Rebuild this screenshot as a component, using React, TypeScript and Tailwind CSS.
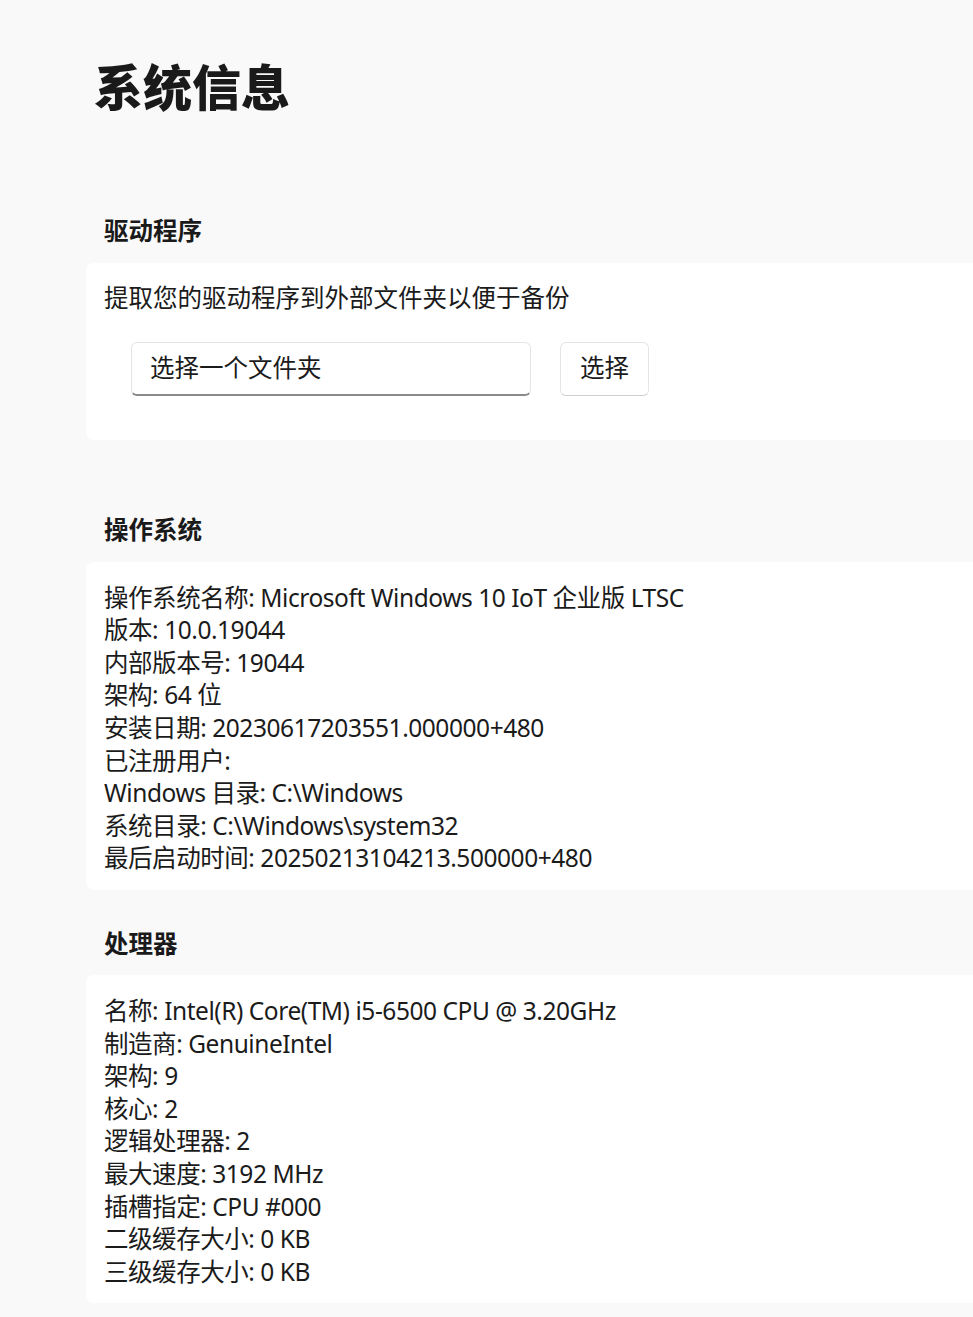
const osLines = [
  '操作系统名称: Microsoft Windows 10 IoT 企业版 LTSC',
  '版本: 10.0.19044',
  '内部版本号: 19044',
  '架构: 64 位',
  '安装日期: 20230617203551.000000+480',
  '已注册用户: ',
  'Windows 目录: C:\\Windows',
  '系统目录: C:\\Windows\\system32',
  '最后启动时间: 20250213104213.500000+480',
];

const cpuLines = [
  '名称: Intel(R) Core(TM) i5-6500 CPU @ 3.20GHz',
  '制造商: GenuineIntel',
  '架构: 9',
  '核心: 2',
  '逻辑处理器: 2',
  '最大速度: 3192 MHz',
  '插槽指定: CPU #000',
  '二级缓存大小: 0 KB',
  '三级缓存大小: 0 KB',
];

function SectionHeader({ title, className }: { title: string; className: string }) {
  return <h2 className={`pl-[18px] text-[24.5px] leading-[32px] font-bold text-[#1a1a1a] ${className}`}>{title}</h2>;
}

function InfoCard({ lines }: { lines: string[] }) {
  return (
    <div className="bg-white rounded-lg pl-[18px] pt-[20px] pb-[15px]">
      {lines.map((line) => (
        <div key={line} className="text-[24.5px] leading-[32.6px] tracking-[-0.45px] text-[#1b1b1b] whitespace-pre">
          {line}
        </div>
      ))}
    </div>
  );
}

export default function App() {
  return (
    <div
      className="min-h-screen bg-[#f9f9f9] overflow-hidden"
      style={{ fontFamily: '"Noto Sans", "Noto Sans CJK SC", sans-serif' }}
    >
      <div className="pl-[86px] -mr-[24px] pt-[58px] pb-[14px]">
        <h1 className="ml-[8px] text-[49px] leading-[58px] font-black text-[#1a1a1a]">系统信息</h1>

        <SectionHeader title="驱动程序" className="mt-[99px] mb-[16px]" />
        <div className="bg-white rounded-lg pl-[18px] pt-[19px] pb-[44px]">
          <div className="text-[24.5px] leading-[32.6px] text-[#1b1b1b]">提取您的驱动程序到外部文件夹以便于备份</div>
          <div className="mt-[27px] ml-[27px] flex items-center gap-[29px]">
            <div className="w-[400px] h-[54px] rounded-md border border-[#e5e5e5] border-b-2 border-b-[#8a8a8a] bg-white flex items-center pl-[18px] text-[24.5px] text-[#1b1b1b]">
              选择一个文件夹
            </div>
            <button className="w-[89px] h-[54px] rounded-md border border-[#e5e5e5] border-b-[#d0d0d0] bg-white text-[24.5px] text-[#1b1b1b]">
              选择
            </button>
          </div>
        </div>

        <SectionHeader title="操作系统" className="mt-[74px] mb-[16px]" />
        <InfoCard lines={osLines} />

        <SectionHeader title="处理器" className="mt-[38px] mb-[15px]" />
        <InfoCard lines={cpuLines} />
      </div>
    </div>
  );
}
